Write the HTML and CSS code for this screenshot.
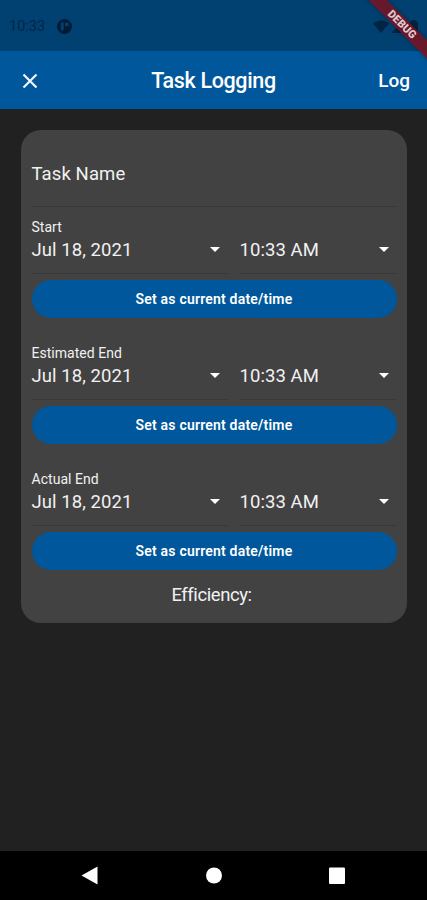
FILE: index.html
```html
<!DOCTYPE html>
<html lang="en">
<head>
<meta charset="utf-8">
<title>Task Logging</title>
<link rel="stylesheet" href="styles.css">
</head>
<body>
<div class="screen">
  <div class="status">
    <span class="clock">10:33</span>
    <svg class="notice" width="15" height="15" viewBox="0 0 15 15"><path fill-rule="evenodd" d="M7.5 0a7.5 7.5 0 1 0 0 15a7.5 7.5 0 0 0 0-15zM3.7 3.5h3v7.8h-3zM8 3.7h3.6v3.6H8z"/></svg>
    <svg class="signals" width="48" height="16" viewBox="0 0 48 16"><path d="M0 4.5Q8 -1.5 16 4.5L8 14zM18 14L32 1V14zM37 2.500h2V1h4v1.500h2V14h-8z"/></svg>
  </div>
  <header class="appbar">
    <svg class="close" width="16" height="16" viewBox="0 0 16 16"><path d="M1.500 1.500L14.500 14.500M14.500 1.500L1.500 14.500"/></svg>
    <h1 class="title">Task Logging</h1>
    <span class="log">Log</span>
  </header>
  <main class="body">
    <section class="card">
      <div class="name">Task Name</div>
      <div class="group">
        <div class="label">Start</div>
        <div class="fields">
          <div class="field date"><span>Jul 18, 2021</span><i class="caret"></i></div>
          <div class="field time"><span>10:33 AM</span><i class="caret"></i></div>
        </div>
        <button class="set">Set as current date/time</button>
      </div>
      <div class="group">
        <div class="label">Estimated End</div>
        <div class="fields">
          <div class="field date"><span>Jul 18, 2021</span><i class="caret"></i></div>
          <div class="field time"><span>10:33 AM</span><i class="caret"></i></div>
        </div>
        <button class="set">Set as current date/time</button>
      </div>
      <div class="group">
        <div class="label">Actual End</div>
        <div class="fields">
          <div class="field date"><span>Jul 18, 2021</span><i class="caret"></i></div>
          <div class="field time"><span>10:33 AM</span><i class="caret"></i></div>
        </div>
        <button class="set">Set as current date/time</button>
      </div>
      <div class="efficiency">Efficiency:</div>
    </section>
  </main>
  <nav class="nav">
    <svg width="427" height="49" viewBox="0 0 427 49"><path d="M81.500 24.500L97.500 15.500V33.500z"/><circle cx="214" cy="24.500" r="8"/><rect x="329" y="16.500" width="16" height="16.500" rx="1"/></svg>
  </nav>
  <div class="banner">DEBUG</div>
</div>
</body>
</html>
```
FILE: styles.css
```css
* { box-sizing: border-box; }
body { margin: 0; background: #212121; font-family: Roboto, sans-serif; color: #f1f1f1; }
.screen { position: relative; width: 427px; height: 900px; overflow: hidden; display: flex; flex-direction: column; }
.status { height: 51px; background: #004172; display: flex; align-items: center; padding: 2px 6px 0 9px; color: #002644; }
.clock { font-size: 14.5px; width: 48px; }
.notice { fill: #001c35; }
.signals { fill: #002442; margin-left: auto; }
.appbar { height: 58px; background: #00579b; display: grid; grid-template-columns: 48px 1fr 48px; align-items: center; padding: 1px 17px 0 22px; color: #fff; }
.close { fill: none; stroke: #f2f6ff; stroke-width: 2.2; }
.title { margin: 0; padding-right: 5px; text-align: center; font-size: 21.500px; letter-spacing: -.35px; font-weight: 500; line-height: 26px; padding-top: 1px; }
.log { text-align: right; white-space: nowrap; font-size: 19px; font-weight: 500; }
.body { flex: 1; padding: 21px 20.500px 0 21px; }
.card { height: 493px; border-radius: 20px; background: #424242; padding: 0 10px 0 10.500px; }
.name { height: 77px; padding-top: 32px; font-size: 18.500px; letter-spacing: .1px; line-height: 24px; border-bottom: 1px solid #383838; }
.group { height: 126px; padding-top: 12px; }
.label { font-size: 14px; line-height: 17px; letter-spacing: .03px; }
.fields { display: flex; gap: 12px; }
.field { height: 38px; padding: 3px 8px 0 0; display: flex; justify-content: space-between; font-size: 18.500px; letter-spacing: .07px; line-height: 22px; border-bottom: 1px solid #383838; white-space: nowrap; }
.date { width: 196px; }
.time { flex: 1; }
.caret { width: 0; height: 0; border: 5.500px solid transparent; border-top-color: #fff; border-bottom: 0; margin-top: 8px; }
.set { display: block; width: 100%; height: 38px; margin-top: 6px; padding: 0; border: 0; border-radius: 19px; background: #00579b; color: #fff; font: 600 14px/38px Roboto, sans-serif; letter-spacing: .2px; }
.efficiency { text-align: center; margin-top: -2px; padding-right: 5px; line-height: 24px; font-size: 18.500px; letter-spacing: -.43px; font-variant-ligatures: none; }
.nav { height: 49px; background: #000; }
.nav svg { display: block; fill: #fff; }
.banner { position: absolute; left: 342px; top: 18px; width: 120px; height: 13px; transform: rotate(45deg); background: rgba(115, 20, 36, .9); color: #dfc8cd; text-align: center; font-size: 11px; line-height: 13px; font-weight: 900; box-shadow: 0 0 5px rgba(0, 0, 0, .3); }
```
